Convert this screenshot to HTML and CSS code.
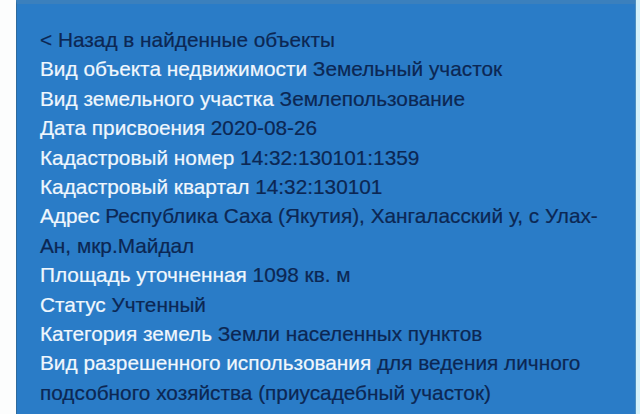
FILE: index.html
```
<!DOCTYPE html>
<html lang="ru">
<head>
<meta charset="utf-8">
<link rel="stylesheet" href="styles.css">
</head>
<body>
<div class="page">
  <div class="gutter"></div>
  <main class="panel">
    <a class="back" href="#">&lt; Назад в найденные объекты</a>
    <p class="row"><span class="label">Вид объекта недвижимости</span> <span class="value">Земельный участок</span></p>
    <p class="row"><span class="label">Вид земельного участка</span> <span class="value">Землепользование</span></p>
    <p class="row"><span class="label">Дата присвоения</span> <span class="value">2020-08-26</span></p>
    <p class="row"><span class="label">Кадастровый номер</span> <span class="value">14:32:130101:1359</span></p>
    <p class="row"><span class="label">Кадастровый квартал</span> <span class="value">14:32:130101</span></p>
    <p class="row"><span class="label">Адрес</span> <span class="value">Республика Саха (Якутия), Хангаласский у, с Улах-Ан, мкр.Майдал</span></p>
    <p class="row"><span class="label">Площадь уточненная</span> <span class="value">1098 кв. м</span></p>
    <p class="row"><span class="label">Статус</span> <span class="value">Учтенный</span></p>
    <p class="row"><span class="label">Категория земель</span> <span class="value">Земли населенных пунктов</span></p>
    <p class="row"><span class="label">Вид разрешенного использования</span> <span class="value">для ведения личного подсобного хозяйства (приусадебный участок)</span></p>
  </main>
  <div class="edge"></div>
</div>
</body>
</html>
```
FILE: styles.css
```
html, body {
  margin: 0;
  padding: 0;
  background: #fcfdfd;
}
.page {
  display: flex;
  height: 414px;
  overflow: hidden;
}
.gutter {
  width: 16px;
  flex: none;
  background: #fcfdfd;
}
.panel {
  width: 619px;
  flex: none;
  box-sizing: border-box;
  background: #2a7cc7;
  border-left: 1px solid #2e6a9c;
  border-top: 4px solid #3b80bd;
  padding: 21px 20px 0 23px;
  font-family: "Liberation Sans", Arial, sans-serif;
  font-size: 20.8px;
  line-height: 29.4px;
  color: #0c2753;
  -webkit-text-stroke: 0.2px currentColor;
}
.edge {
  flex: 1;
  background: #d5f2fb;
  border-left: 1px solid #4f8fbf;
}
.back {
  display: block;
  color: #0c2753;
  text-decoration: none;
}
.row {
  margin: 0;
}
.label {
  color: #f0f7fd;
}
.value {
  color: #0c2753;
}
```
